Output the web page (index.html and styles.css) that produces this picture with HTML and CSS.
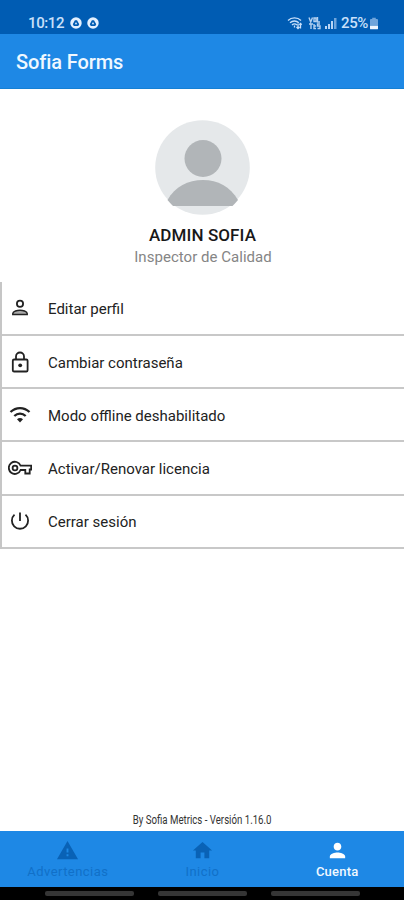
FILE: index.html
```html
<!DOCTYPE html>
<html lang="es">
<head>
<meta charset="utf-8">
<title>Sofia Forms</title>
<link rel="stylesheet" href="styles.css">
</head>
<body>
<div class="app">
  <div class="status">
    <span class="time">10:12</span>
    <svg class="drive" viewBox="0 0 13 13"><circle cx="6.5" cy="6.5" r="6.2"/><path d="M5.3 3.5h2.3l2.4 4.4-1.1 1.8H4.1L3 7.9zM6.5 5.5 5.2 7.8h2.6z" fill-rule="evenodd"/></svg>
    <svg class="drive" viewBox="0 0 13 13"><circle cx="6.5" cy="6.5" r="6.2"/><path d="M5.3 3.5h2.3l2.4 4.4-1.1 1.8H4.1L3 7.9zM6.5 5.5 5.2 7.8h2.6z" fill-rule="evenodd"/></svg>
    <svg class="st-wifi" viewBox="0 0 16 14"><path d="M1 4.500C4.500 1 10.500 1 14 4.500M3 6.800c2.500-2.400 6.300-2.400 8.800 0M5 9c1.500-1.400 3.500-1.400 5 0"/><path d="M7.500 11.500v-2M11 7.500v5M9.500 11l1.500 1.500L12.500 11M13.500 12.500v-5M12.300 8.800l1.200-1.300 1.200 1.300"/></svg>
    <svg class="st-volte" viewBox="0 0 13 14"><path d="M1 1.500 2.700 6 4.500 1.500M6 2v3.500h2V2zM9.500 1v5h2.500M1 8h4M3 8v5M6 8v4.500h2M6 10h2M12 8H9.500v2H12v2.500H9.500"/></svg>
    <svg class="st-signal" viewBox="0 0 12 12"><path d="M0 9h2v3H0zM3 7h2v5H3zM6 4h2v8H6z"/><path class="dim" d="M9 1h2.500v11H9z"/></svg>
    <span class="percent">25%</span>
    <svg class="st-battery" viewBox="0 0 9 13"><path class="dim" d="M2.500 1.500V0h4v1.500H8q1 0 1 1V9H0V2.500q0-1 1-1z"/><path d="M0 9h9v3q0 1-1 1H1q-1 0-1-1z"/></svg>
  </div>
  <header class="bar"><h1>Sofia Forms</h1></header>
  <main>
    <section class="profile">
      <svg class="avatar" viewBox="0 0 96 96"><circle class="disc" cx="48.500" cy="47.500" r="47.300"/><circle cx="49" cy="38.500" r="18.500"/><path d="M13.500 80C21 66.500 34 60 49 60S76 66.500 84 80Q81.500 83 78.500 86H19Q16 83 13.500 80z"/></svg>
      <div class="name">ADMIN SOFIA</div>
      <div class="role">Inspector de Calidad</div>
    </section>
    <ul class="menu">
      <li><svg viewBox="0 0 24 24"><circle cx="12" cy="6.800" r="3.100"/><path class="body" d="M4.800 17.600v-1c0-2.400 4.700-3.400 7.200-3.400s7.200 1 7.200 3.400v1z"/></svg><span>Editar perfil</span></li>
      <li><svg viewBox="0 0 24 24"><rect x="4.800" y="8.500" width="14.800" height="12" rx="1.300"/><path d="M8 8.500V5.500a4 4 0 0 1 8 0v3"/><circle class="solid" cx="12.200" cy="14.300" r="1.900"/></svg><span>Cambiar contraseña</span></li>
      <li><svg viewBox="0 0 24 24"><path class="thick" d="M2.500 8C8 2.700 16 2.700 21.500 8M6.300 12c3.300-3.200 8.100-3.200 11.400 0"/><path class="solid" d="m12 18.500-3-3.300c1.800-1.700 4.200-1.700 6 0z"/></svg><span>Modo offline deshabilitado</span></li>
      <li><svg viewBox="0 0 24 24"><path d="M12.600 8.700H23.200v3.800h-1.500v4h-4.400v-3.500h-4.700a6.100 6.100 0 1 1 0-4.300z"/><circle cx="7" cy="11" r="2.400"/></svg><span>Activar/Renovar licencia</span></li>
      <li><svg viewBox="0 0 24 24"><path d="M12 2.500v8.500M6.500 4.700a8.100 8.100 0 1 0 11 0"/></svg><span>Cerrar sesión</span></li>
    </ul>
    <footer class="version"><span>By Sofia Metrics - Versión 1.16.0</span></footer>
  </main>
  <nav class="tabs">
    <a><svg viewBox="0 0 24 24"><path d="M1 21h22L12 2 1 21zm12-3h-2v-2h2v2zm0-4h-2v-4h2v4z"/></svg><span class="wide">Advertencias</span></a>
    <a><svg viewBox="0 0 24 24"><path d="M10 20v-6h4v6h5v-8h3L12 3 2 12h3v8z"/></svg><span class="wide">Inicio</span></a>
    <a class="active"><svg viewBox="0 0 24 24"><path d="M12 12c2.210 0 4-1.790 4-4s-1.790-4-4-4-4 1.790-4 4 1.790 4 4 4zm0 2c-2.670 0-8 1.340-8 4v2h16v-2c0-2.660-5.330-4-8-4z"/></svg><span>Cuenta</span></a>
  </nav>
  <div class="system"><i></i><i></i><i></i></div>
</div>
</body>
</html>
```
FILE: styles.css
```css
* { box-sizing: border-box; }
body { margin: 0; font-family: Roboto, "Liberation Sans", sans-serif; background: #fff; color: #222; }
svg { display: block; flex: none; }
.app { width: 404px; height: 900px; display: flex; flex-direction: column; overflow: hidden; }
.status { height: 34px; flex: none; background: #005cb3; display: flex; align-items: center; padding: 12px 26px 0 28px; color: #c9e0fa; font-size: 15px; font-weight: 500; line-height: 22px; }
.time { width: 36px; letter-spacing: -.4px; }
.drive { width: 12px; height: 12px; margin-left: 6px; }
.drive + .drive { margin-left: 5px; }
.drive circle { fill: #e3f0ff; }
.drive path { fill: #005cb3; }
.st-wifi { width: 16px; height: 14px; margin-left: auto; fill: none; stroke: #c9e0fb; stroke-width: 1.3; }
.st-volte { width: 13px; height: 14px; margin-left: 5px; fill: none; stroke: #b3d0f0; stroke-width: 1.4; }
.st-signal { width: 12px; height: 12px; margin-left: 4px; fill: #b7d4f5; }
.dim { fill: #6fa5dc; }
.percent { margin-left: 4px; width: 28px; letter-spacing: -.4px; }
.st-battery { width: 8px; height: 13px; margin-left: 1px; fill: #eef6ff; }
.bar { height: 55px; flex: none; background: #1e88e5; border-bottom: 1px solid #1580d4; padding: 2px 16px 0; display: flex; align-items: center; }
h1 { margin: 0; font-size: 20px; font-weight: 500; line-height: 24px; letter-spacing: -.1px; color: #f0f8ff; }
main { flex: 1; display: flex; flex-direction: column; }
.profile { height: 193px; padding-top: 31px; display: flex; flex-direction: column; align-items: center; }
.avatar { width: 96px; height: 96px; fill: #b1b5b8; }
.disc { fill: #e5e8ea; }
.name { font-size: 17px; line-height: 22px; margin-top: 8px; font-weight: 500; color: #181818; padding-left: 1px; letter-spacing: .1px; }
.role { font-size: 15px; line-height: 22px; color: #858585; letter-spacing: .03px; padding-left: 2px; }
.menu { list-style: none; margin: 0; padding: .8px 0 0; border-left: 2px solid #c6c6c6; }
.menu li { height: 53.2px; display: flex; align-items: center; padding: 2px 0 0 6px; border-bottom: 2px solid #c8c8c8; font-size: 15px; }
.menu svg { width: 24px; height: 24px; fill: none; stroke: #222; stroke-width: 1.8; margin-right: 16px; }
.menu .body { fill: #aaa; stroke-width: 1.5; }
.menu .solid { fill: #222; stroke: none; }
.menu .thick { stroke-width: 2.3; }
.version { margin-top: auto; height: 22px; display: flex; justify-content: center; font-size: 12px; line-height: 22px; color: #333; white-space: nowrap; }
.version span { transform: scaleX(.805); padding-left: 1px; }
.tabs { height: 56px; flex: none; background: #1e88e5; display: grid; grid-template-columns: 1fr 1fr 1fr; color: #1170c8; font-size: 13px; }
.tabs a { display: flex; flex-direction: column; align-items: center; padding: 8px 0 0 1px; }
.tabs svg { width: 23px; height: 23px; fill: #0962b6; }
.tabs span { line-height: 20px; letter-spacing: .2px; }
.tabs .wide { letter-spacing: .45px; }
.tabs .active { color: #f2f9ff; font-weight: 500; }
.tabs .active svg { fill: #fff; }
.system { height: 13px; flex: none; background: #000; display: flex; justify-content: space-between; padding: 4px 44px 0 45px; }
.system i { width: 89px; height: 5px; background: #353535; border-radius: 2px; }
```
